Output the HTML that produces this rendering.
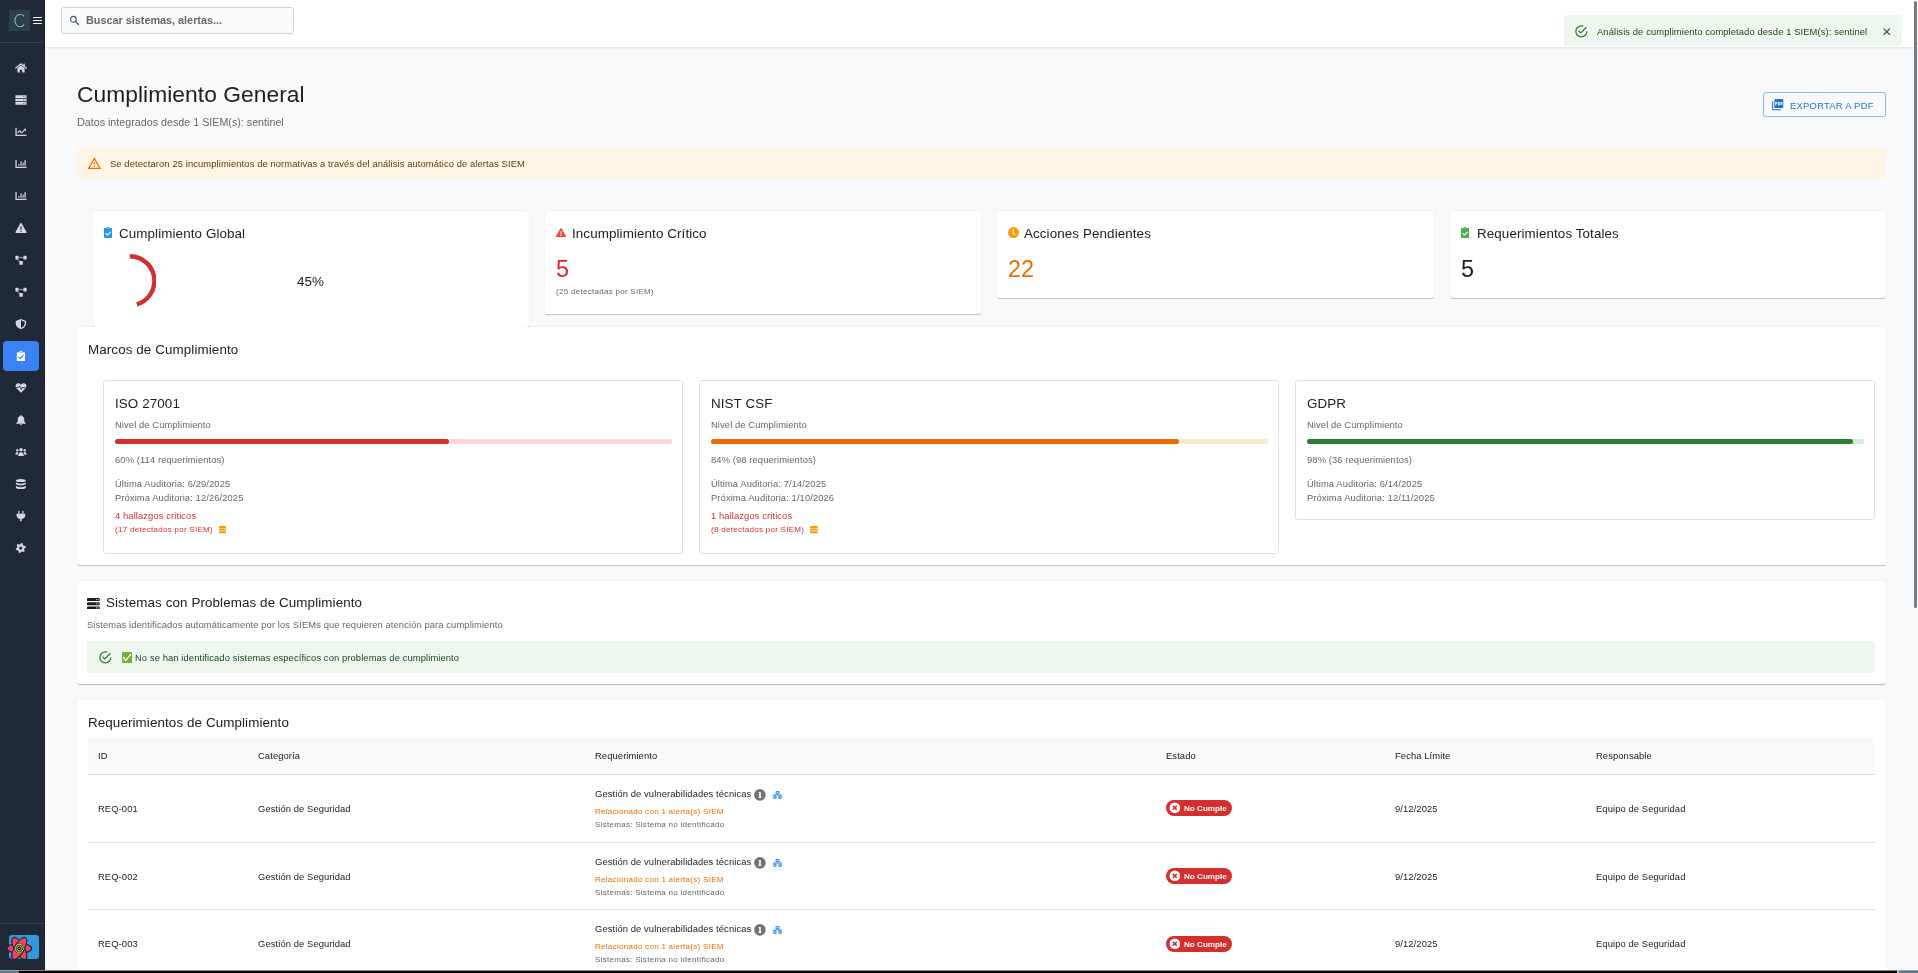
<!DOCTYPE html>
<html><head><meta charset="utf-8"><title>Cumplimiento</title>
<style>
html,body{margin:0;padding:0;}
body{width:1918px;height:973px;overflow:hidden;position:relative;background:#f8f9fb;font-family:"Liberation Sans",sans-serif;}
.t{position:absolute;white-space:nowrap;will-change:transform;}
.b{position:absolute;display:block;}
</style></head><body>
<div class="b" style="left:0.00px;top:0.00px;width:45.00px;height:973.00px;background:#1f2937;"></div>
<div class="b" style="left:44.00px;top:0.00px;width:1.00px;height:973.00px;background:#161e2b;"></div>
<div class="b" style="left:0.00px;top:42.00px;width:44.00px;height:1.00px;background:#374151;"></div>
<div class="b" style="left:9.00px;top:10.00px;width:21.00px;height:21.00px;background:#2e3e4c;"></div>
<svg class="b" style="left:12.00px;top:12.00px;" width="15.00" height="17.00" viewBox="0 0 15 17"><path d="M12.2 4.4 A5.3 6.2 0 1 0 12.2 12.6" fill="none" stroke="#80c2c2" stroke-width="1.05"/></svg>
<div class="b" style="left:33.20px;top:17.00px;width:8.80px;height:1.35px;background:#f3f4f6;border-radius:0.7px;"></div>
<div class="b" style="left:33.20px;top:19.90px;width:8.80px;height:1.35px;background:#f3f4f6;border-radius:0.7px;"></div>
<div class="b" style="left:33.20px;top:22.90px;width:8.80px;height:1.35px;background:#f3f4f6;border-radius:0.7px;"></div>
<div class="b" style="left:3.00px;top:341.00px;width:36.00px;height:30.00px;background:#3b82f6;border-radius:4px;"></div>
<svg class="b" style="left:14.60px;top:62.30px;" width="12.00" height="12.00" viewBox="0 0 24 24"><path d="M1.2 12.5 L12 3.6 L22.8 12.5" stroke="#d4d8de" stroke-width="2.3" fill="none" stroke-linecap="round" stroke-linejoin="round"/><rect x="16.8" y="3.2" width="2.8" height="5.5" fill="#d4d8de"/><path fill="#d4d8de" d="M4.8 12.4 L12 6.6 L19.2 12.4 V20.8 H14.3 V15.6 H9.7 V20.8 H4.8Z"/></svg>
<svg class="b" style="left:14.60px;top:94.40px;" width="12.00" height="12.00" viewBox="0 0 24 24"><rect x="0.8" y="2.6" width="22.4" height="5.4" rx="1" fill="#d4d8de"/><circle cx="17.3" cy="5.3" r="0.9" fill="#1f2937"/><circle cx="20.2" cy="5.3" r="0.9" fill="#1f2937"/><rect x="0.8" y="9.3" width="22.4" height="5.4" rx="1" fill="#d4d8de"/><circle cx="17.3" cy="12.0" r="0.9" fill="#1f2937"/><circle cx="20.2" cy="12.0" r="0.9" fill="#1f2937"/><rect x="0.8" y="16.0" width="22.4" height="5.4" rx="1" fill="#d4d8de"/><circle cx="17.3" cy="18.7" r="0.9" fill="#1f2937"/><circle cx="20.2" cy="18.7" r="0.9" fill="#1f2937"/></svg>
<svg class="b" style="left:14.60px;top:126.20px;" width="12.00" height="12.00" viewBox="0 0 24 24"><path d="M2.1 3.6 V18.7 H23.2" stroke="#d4d8de" stroke-width="2.6" fill="none"/><path d="M5.2 13.4 L9.8 9.6 L13.2 13.6 L18.8 8.2" stroke="#d4d8de" stroke-width="2.3" fill="none" stroke-linejoin="round"/><path fill="#d4d8de" d="M16.6 5.6 H22 V11Z"/></svg>
<svg class="b" style="left:14.60px;top:158.10px;" width="12.00" height="12.00" viewBox="0 0 24 24"><path d="M2.1 3.8 V18.7 H23.2" stroke="#d4d8de" stroke-width="2.6" fill="none"/><rect x="6.6" y="12.2" width="2.2" height="3.4" fill="#d4d8de"/><rect x="10.8" y="7" width="2.3" height="8.6" fill="#d4d8de"/><rect x="15" y="9" width="2.3" height="6.6" fill="#d4d8de"/><rect x="19" y="4.2" width="2.5" height="11.4" fill="#d4d8de"/></svg>
<svg class="b" style="left:14.60px;top:190.10px;" width="12.00" height="12.00" viewBox="0 0 24 24"><path d="M2.1 3.8 V18.7 H23.2" stroke="#d4d8de" stroke-width="2.6" fill="none"/><rect x="6.6" y="12.2" width="2.2" height="3.4" fill="#d4d8de"/><rect x="10.8" y="7" width="2.3" height="8.6" fill="#d4d8de"/><rect x="15" y="9" width="2.3" height="6.6" fill="#d4d8de"/><rect x="19" y="4.2" width="2.5" height="11.4" fill="#d4d8de"/></svg>
<svg class="b" style="left:14.60px;top:222.00px;" width="12.00" height="12.00" viewBox="0 0 24 24"><path fill="#d4d8de" d="M10.6 3 Q12 0.8 13.4 3 L23 20 Q23.6 22 21.6 22 H2.4 Q0.4 22 1 20Z"/><rect x="10.9" y="8.5" width="2.2" height="7.5" rx="1" fill="#1f2937"/><circle cx="12" cy="18.6" r="1.3" fill="#1f2937"/></svg>
<svg class="b" style="left:14.60px;top:254.30px;" width="12.00" height="12.00" viewBox="0 0 24 24"><path d="M5 7.2 H18 M4.2 9.5 L10.5 16.5" stroke="#d4d8de" stroke-width="1.3" fill="none"/><rect x="0.8" y="3.4" width="6" height="7.6" rx="0.8" fill="#d4d8de"/><rect x="16.8" y="3.4" width="6.4" height="7.6" rx="0.8" fill="#d4d8de"/><rect x="8.8" y="14" width="6.8" height="7.4" rx="0.8" fill="#d4d8de"/></svg>
<svg class="b" style="left:14.60px;top:286.30px;" width="12.00" height="12.00" viewBox="0 0 24 24"><path d="M5 7.2 H18 M4.2 9.5 L10.5 16.5" stroke="#d4d8de" stroke-width="1.3" fill="none"/><rect x="0.8" y="3.4" width="6" height="7.6" rx="0.8" fill="#d4d8de"/><rect x="16.8" y="3.4" width="6.4" height="7.6" rx="0.8" fill="#d4d8de"/><rect x="8.8" y="14" width="6.8" height="7.4" rx="0.8" fill="#d4d8de"/></svg>
<svg class="b" style="left:14.60px;top:318.00px;" width="12.00" height="12.00" viewBox="0 0 24 24"><path fill="#d4d8de" d="M12 1.8 L22.2 6 V10 C22.2 16.5 17.5 20.8 12 22.2 C6.5 20.8 1.4 16.5 1.4 10 V6Z"/><path fill="#1f2937" d="M12 4.6 L19.6 7.8 V10.2 C19.6 14.8 16.5 18.2 12 19.6Z"/></svg>
<svg class="b" style="left:14.60px;top:350.00px;" width="12.00" height="12.00" viewBox="0 0 24 24"><path fill="#ffffff" d="M3.6 5 H8.3 A3.7 3.7 0 0 1 15.7 5 H20 V22 H3.6Z"/><circle cx="12" cy="4.6" r="1.3" fill="#3b82f6"/><path fill="none" stroke="#3b82f6" stroke-width="2.4" d="M6.8 13.8 L10.4 17 L17.2 10.4"/></svg>
<svg class="b" style="left:14.60px;top:382.40px;" width="12.00" height="12.00" viewBox="0 0 24 24"><path fill="#d4d8de" d="M12 21.6 L3 12.5 C0 9.5 0.8 4.5 4.5 3 C7.5 1.8 10.3 3.2 12 5.5 C13.7 3.2 16.5 1.8 19.5 3 C23.2 4.5 24 9.5 21 12.5Z"/><path d="M0.5 11 H7.2 L9.2 7.8 L12.4 15 L14.5 10 L16 11.6 H23.5" stroke="#1f2937" stroke-width="1.6" fill="none" stroke-linejoin="round"/></svg>
<svg class="b" style="left:14.60px;top:414.00px;" width="12.00" height="12.00" viewBox="0 0 24 24"><path fill="#d4d8de" d="M12 1.8 C12.9 1.8 13.5 2.4 13.5 3.3 V4 C16.8 4.8 18.5 7.5 18.5 10.5 V15 L21.6 18.5 V19.6 H2.4 V18.5 L5.5 15 V10.5 C5.5 7.5 7.2 4.8 10.5 4 V3.3 C10.5 2.4 11.1 1.8 12 1.8Z"/><path fill="#d4d8de" d="M9.4 20.4 H14.6 A2.6 1.9 0 0 1 9.4 20.4Z"/></svg>
<svg class="b" style="left:14.60px;top:446.20px;" width="12.00" height="12.00" viewBox="0 0 24 24"><circle cx="12" cy="7.4" r="3.4" fill="#d4d8de"/><circle cx="4.6" cy="8.6" r="2.4" fill="#d4d8de"/><circle cx="19.4" cy="8.6" r="2.4" fill="#d4d8de"/><path fill="#d4d8de" d="M6.4 20 C6.4 15 8.5 12.4 12 12.4 C15.5 12.4 17.6 15 17.6 20Z"/><path fill="#d4d8de" d="M0.8 17.6 C0.8 14 2.2 12 4.6 12 C5.6 12 6.4 12.3 6.9 12.8 C5.8 14 5.2 15.8 5.2 17.6Z M23.2 17.6 C23.2 14 21.8 12 19.4 12 C18.4 12 17.6 12.3 17.1 12.8 C18.2 14 18.8 15.8 18.8 17.6Z"/></svg>
<svg class="b" style="left:14.60px;top:478.00px;" width="12.00" height="12.00" viewBox="0 0 24 24"><ellipse cx="11.7" cy="5" rx="9.9" ry="3.2" fill="#d4d8de"/><path fill="#d4d8de" d="M1.8 8.6 C3 10.4 7 11.4 11.7 11.4 S20.4 10.4 21.6 8.6 V12 C20.4 13.8 16.4 14.8 11.7 14.8 S3 13.8 1.8 12Z"/><path fill="#d4d8de" d="M1.8 15.6 C3 17.4 7 18.4 11.7 18.4 S20.4 17.4 21.6 15.6 V19 C21.6 20.8 17 22.2 11.7 22.2 S1.8 20.8 1.8 19Z"/></svg>
<svg class="b" style="left:14.60px;top:510.00px;" width="12.00" height="12.00" viewBox="0 0 24 24"><rect x="6.6" y="1.6" width="2.4" height="6.5" rx="1.2" fill="#d4d8de"/><rect x="14.6" y="1.6" width="2.4" height="6.5" rx="1.2" fill="#d4d8de"/><path fill="#d4d8de" d="M3 7.6 H20.6 V10.2 C20.6 14.4 17.6 17.4 13.4 18 V22.4 H10.2 V18 C6 17.4 3 14.4 3 10.2Z"/></svg>
<svg class="b" style="left:14.60px;top:542.00px;" width="12.00" height="12.00" viewBox="0 0 24 24"><path fill="#d4d8de" d="M12.83 1.89 L15.40 2.58 L16.00 6.13 L17.37 7.50 L20.92 8.10 L21.61 10.67 L18.84 12.97 L18.34 14.83 L19.59 18.21 L17.71 20.09 L14.33 18.84 L12.47 19.34 L10.17 22.11 L7.60 21.42 L7.00 17.87 L5.63 16.50 L2.08 15.90 L1.39 13.33 L4.16 11.03 L4.66 9.17 L3.41 5.79 L5.29 3.91 L8.67 5.16 L10.53 4.66Z"/><circle cx="11.50" cy="12.00" r="3.20" fill="#1f2937"/></svg>
<div class="b" style="left:0.00px;top:923.00px;width:44.00px;height:1.00px;background:#374151;"></div>
<div class="b" style="left:9.00px;top:935.00px;width:30.00px;height:24.00px;background:#3498db;border-radius:3px;"></div>
<svg class="b" style="left:4.00px;top:934.00px;" width="32.00" height="28.00" viewBox="0 0 32 28"><ellipse cx="0" cy="0" rx="12.4" ry="4.9" fill="#f7435a" stroke="#0f2a44" stroke-width="1.1" transform="translate(15.3 14.4) rotate(0)"/><ellipse cx="0" cy="0" rx="12.4" ry="4.9" fill="#f7435a" stroke="#0f2a44" stroke-width="1.1" transform="translate(15.3 14.4) rotate(60)"/><ellipse cx="0" cy="0" rx="12.4" ry="4.9" fill="#f7435a" stroke="#0f2a44" stroke-width="1.1" transform="translate(15.3 14.4) rotate(120)"/><polygon points="20.60,14.40 17.95,18.99 12.65,18.99 10.00,14.40 12.65,9.81 17.95,9.81" fill="#0f2a44"/><polygon points="19.70,14.40 17.50,18.21 13.10,18.21 10.90,14.40 13.10,10.59 17.50,10.59" fill="none" stroke="#e8cf45" stroke-width="1"/><circle cx="15.3" cy="14.4" r="2.4" fill="none" stroke="#e8cf45" stroke-width="0.85"/><circle cx="15.3" cy="14.4" r="0.6" fill="#e8cf45"/></svg>
<div class="b" style="left:45.00px;top:0.00px;width:1873.00px;height:47.00px;background:#fff;border-bottom:1px solid #e5e7eb;box-shadow:0 1px 2px rgba(0,0,0,0.05);"></div>
<div class="b" style="left:61.00px;top:7.00px;width:233.00px;height:27.00px;background:#f8fafc;border:1px solid #cbd5e1;border-radius:3px;box-sizing:border-box;"></div>
<svg class="b" style="left:68.50px;top:14.50px;" width="11.00" height="11.00" viewBox="0 0 24 24"><circle cx="9.6" cy="9.4" r="6.4" fill="none" stroke="#4a5a70" stroke-width="2.6"/><path d="M14.4 14.4 L20.8 20.8" stroke="#4a5a70" stroke-width="3" stroke-linecap="round"/></svg>
<div class="t" style="left:86.00px;top:14px;font-size:10.83px;line-height:12.45px;color:#676767;font-weight:700;">Buscar sistemas, alertas...</div>
<div class="b" style="left:1564.00px;top:15.00px;width:338.00px;height:31.00px;background:#edf7ed;border-radius:2.7px;"></div>
<svg class="b" style="left:1573.80px;top:23.80px;" width="14.74" height="14.74" viewBox="0 0 24 24"><path fill="#2e7d32" d="M20,12A8,8 0 0,1 12,20A8,8 0 0,1 4,12A8,8 0 0,1 12,4C12.76,4 13.5,4.11 14.2,4.31L15.77,2.74C14.61,2.26 13.34,2 12,2A10,10 0 0,0 2,12A10,10 0 0,0 12,22A10,10 0 0,0 22,12M7.91,10.08L6.5,11.5L11,16L21,6L19.59,4.58L11,13.17L7.91,10.08Z"/></svg>
<div class="t" style="left:1597.00px;top:27px;font-size:9.38px;line-height:10.79px;color:#1e4620;letter-spacing:0.100px;">Análisis de cumplimiento completado desde 1 SIEM(s): sentinel</div>
<svg class="b" style="left:1882.00px;top:27.00px;" width="9.50" height="9.50" viewBox="0 0 24 24"><path fill="none" stroke="#1e4620" stroke-width="2.6" d="M4 4l16 16M20 4 4 20"/></svg>
<div class="t" style="left:77.00px;top:81px;font-size:22.78px;line-height:26.20px;color:#212121;letter-spacing:0.060px;">Cumplimiento General</div>
<div class="t" style="left:77.00px;top:116px;font-size:10.72px;line-height:12.33px;color:#666666;letter-spacing:0.000px;">Datos integrados desde 1 SIEM(s): sentinel</div>
<div class="b" style="left:1763.00px;top:92.00px;width:123.00px;height:25.00px;border:1px solid rgba(25,118,210,0.5);border-radius:2.7px;box-sizing:border-box;"></div>
<svg class="b" style="left:1770.50px;top:97.50px;" width="13.40" height="13.40" viewBox="0 0 24 24"><path fill="#1976d2" d="M20 2H8c-1.1 0-2 .9-2 2v12c0 1.1.9 2 2 2h12c1.1 0 2-.9 2-2V4c0-1.1-.9-2-2-2zm-8.5 7.5c0 .83-.67 1.5-1.5 1.5H9v2H7.5V7H10c.83 0 1.5.67 1.5 1.5v1zm5 2c0 .83-.67 1.5-1.5 1.5h-2.5V7H15c.83 0 1.5.67 1.5 1.5v3zm4-3H19v1h1.5V11H19v2h-1.5V7h3v1.5zM9 9.5h1v-1H9v1zM4 6H2v14c0 1.1.9 2 2 2h14v-2H4V6zm10 5.5h1v-3h-1v3z"/></svg>
<div class="t" style="left:1790.00px;top:101px;font-size:9.38px;line-height:10.79px;color:#1976d2;letter-spacing:0.270px;">EXPORTAR A PDF</div>
<div class="b" style="left:77.00px;top:147.00px;width:1809.00px;height:32.00px;background:#fff4e5;border-radius:2.7px;"></div>
<svg class="b" style="left:87.30px;top:156.10px;" width="14.74" height="14.74" viewBox="0 0 24 24"><path fill="#ed6c02" d="M12 5.99L19.53 19H4.47L12 5.99M12 2L1 21h22L12 2zm1 14h-2v2h2v-2zm0-6h-2v4h2v-4z"/></svg>
<div class="t" style="left:110.20px;top:159px;font-size:9.38px;line-height:10.79px;color:#663c00;letter-spacing:0.100px;">Se detectaron 25 incumplimientos de normativas a través del análisis automático de alertas SIEM</div>
<div class="b" style="left:93.00px;top:211.00px;width:436.00px;height:115.70px;background:#fff;border-radius:2.68px;box-shadow:0px 1px 0.6px rgba(0,0,0,0.17),0px 0.5px 2px rgba(0,0,0,0.07);"></div>
<div class="b" style="left:545.00px;top:211.00px;width:436.00px;height:103.30px;background:#fff;border-radius:2.68px;box-shadow:0px 1px 0.6px rgba(0,0,0,0.17),0px 0.5px 2px rgba(0,0,0,0.07);"></div>
<div class="b" style="left:997.00px;top:211.00px;width:437.00px;height:87.00px;background:#fff;border-radius:2.68px;box-shadow:0px 1px 0.6px rgba(0,0,0,0.17),0px 0.5px 2px rgba(0,0,0,0.07);"></div>
<div class="b" style="left:1450.00px;top:211.00px;width:436.00px;height:87.00px;background:#fff;border-radius:2.68px;box-shadow:0px 1px 0.6px rgba(0,0,0,0.17),0px 0.5px 2px rgba(0,0,0,0.07);"></div>
<svg class="b" style="left:104.20px;top:226.90px;" width="8.20" height="10.90" viewBox="0 0 8.2 10.9"><rect x="0" y="1.1" width="8.2" height="9.8" rx="0.9" fill="#2196f3"/><circle cx="4.1" cy="1.35" r="1.35" fill="#2196f3"/><circle cx="4.1" cy="1.7" r="0.45" fill="#fff"/><path fill="none" stroke="#fff" stroke-width="1.15" stroke-linecap="round" stroke-linejoin="round" d="M2 6.5 L3.5 8 L6.4 5.2"/></svg>
<div class="t" style="left:119.40px;top:226px;font-size:13.40px;line-height:15.41px;color:#212121;letter-spacing:0.100px;">Cumplimiento Global</div>
<svg class="b" style="left:102.80px;top:253.90px;" width="53.60" height="53.60" viewBox="0 0 44 44"><circle cx="22" cy="22" r="20.2" fill="none" stroke="#d32f2f" stroke-width="3.6" stroke-dasharray="57.114 200" transform="rotate(-90 22 22)"/></svg>
<div class="t" style="left:297.00px;top:274px;font-size:13.40px;line-height:15.41px;color:#212121;letter-spacing:0.100px;">45%</div>
<svg class="b" style="left:556.10px;top:227.50px;" width="10.00" height="9.60" viewBox="0 0 10 9.6"><path fill="#f44336" d="M4.2 0.7 Q5 -0.3 5.8 0.7 L9.8 8.1 Q10.3 9.5 8.9 9.5 H1.1 Q-0.3 9.5 0.2 8.1Z"/><rect x="4.45" y="3" width="1.1" height="3.4" rx="0.5" fill="#fff"/><circle cx="5" cy="7.7" r="0.65" fill="#fff"/></svg>
<div class="t" style="left:572.00px;top:226px;font-size:13.40px;line-height:15.41px;color:#212121;letter-spacing:0.100px;">Incumplimiento Crítico</div>
<div class="t" style="left:556.00px;top:256px;font-size:23.40px;line-height:26.91px;color:#d32f2f;">5</div>
<div class="t" style="left:556.00px;top:287px;font-size:8.04px;line-height:9.25px;color:#666666;letter-spacing:0.270px;">(25 detectadas por SIEM)</div>
<svg class="b" style="left:1006.80px;top:225.70px;" width="13.10" height="13.10" viewBox="0 0 24 24"><circle cx="12" cy="12" r="10" fill="#ff9800"/><path fill="none" stroke="#fff" stroke-width="2.4" stroke-linecap="round" d="M11.3 6.3v6.3l2.6 2.4"/></svg>
<div class="t" style="left:1024.30px;top:226px;font-size:13.40px;line-height:15.41px;color:#212121;letter-spacing:0.100px;">Acciones Pendientes</div>
<div class="t" style="left:1008.40px;top:256px;font-size:23.40px;line-height:26.91px;color:#ed6c02;">22</div>
<svg class="b" style="left:1461.20px;top:226.90px;" width="8.20" height="10.90" viewBox="0 0 8.2 10.9"><rect x="0" y="1.1" width="8.2" height="9.8" rx="0.9" fill="#4caf50"/><circle cx="4.1" cy="1.35" r="1.35" fill="#4caf50"/><circle cx="4.1" cy="1.7" r="0.45" fill="#fff"/><path fill="none" stroke="#fff" stroke-width="1.15" stroke-linecap="round" stroke-linejoin="round" d="M2 6.5 L3.5 8 L6.4 5.2"/></svg>
<div class="t" style="left:1476.60px;top:226px;font-size:13.40px;line-height:15.41px;color:#212121;letter-spacing:0.100px;">Requerimientos Totales</div>
<div class="t" style="left:1460.70px;top:256px;font-size:23.40px;line-height:26.91px;color:#212121;">5</div>
<div class="b" style="left:77.00px;top:327.00px;width:1809.00px;height:238.00px;background:#fff;border-radius:2.68px;box-shadow:0px 1px 0.6px rgba(0,0,0,0.17),0px 0.5px 2px rgba(0,0,0,0.07);"></div>
<div class="t" style="left:87.60px;top:342px;font-size:13.40px;line-height:15.41px;color:#212121;letter-spacing:0.100px;">Marcos de Cumplimiento</div>
<div class="b" style="left:103.00px;top:380.00px;width:580.00px;height:174.00px;background:#fff;border:1px solid #e0e0e0;border-radius:2.7px;box-sizing:border-box;"></div>
<div class="t" style="left:115.20px;top:396px;font-size:13.40px;line-height:15.41px;color:#212121;letter-spacing:0.100px;">ISO 27001</div>
<div class="t" style="left:115.20px;top:420px;font-size:9.38px;line-height:10.79px;color:#666666;letter-spacing:0.100px;">Nivel de Cumplimiento</div>
<div class="b" style="left:115.20px;top:439.00px;width:557.00px;height:5.00px;background:#fad9d9;border-radius:3px;"></div>
<div class="b" style="left:115.20px;top:439.00px;width:334.20px;height:5.00px;background:#d32f2f;border-radius:3px;"></div>
<div class="t" style="left:115.20px;top:455px;font-size:9.38px;line-height:10.79px;color:#666666;letter-spacing:0.100px;">60% (114 requerimientos)</div>
<div class="t" style="left:115.20px;top:479px;font-size:9.38px;line-height:10.79px;color:#666666;letter-spacing:0.100px;">Última Auditoria: 6/29/2025</div>
<div class="t" style="left:115.20px;top:493px;font-size:9.38px;line-height:10.79px;color:#666666;letter-spacing:0.100px;">Próxima Auditoria: 12/26/2025</div>
<div class="t" style="left:115.20px;top:511px;font-size:9.38px;line-height:10.79px;color:#d32f2f;letter-spacing:0.100px;">4 hallazgos criticos</div>
<div class="t" style="left:115.20px;top:525px;font-size:8.04px;line-height:9.25px;color:#d32f2f;letter-spacing:0.270px;">(17 detectados por SIEM)</div>
<div class="b" style="left:699.00px;top:380.00px;width:580.00px;height:174.00px;background:#fff;border:1px solid #e0e0e0;border-radius:2.7px;box-sizing:border-box;"></div>
<div class="t" style="left:711.20px;top:396px;font-size:13.40px;line-height:15.41px;color:#212121;letter-spacing:0.100px;">NIST CSF</div>
<div class="t" style="left:711.20px;top:420px;font-size:9.38px;line-height:10.79px;color:#666666;letter-spacing:0.100px;">Nivel de Cumplimiento</div>
<div class="b" style="left:711.20px;top:439.00px;width:557.00px;height:5.00px;background:#fde8cf;border-radius:3px;"></div>
<div class="b" style="left:711.20px;top:439.00px;width:467.88px;height:5.00px;background:#ed6c02;border-radius:3px;"></div>
<div class="t" style="left:711.20px;top:455px;font-size:9.38px;line-height:10.79px;color:#666666;letter-spacing:0.100px;">84% (98 requerimientos)</div>
<div class="t" style="left:711.20px;top:479px;font-size:9.38px;line-height:10.79px;color:#666666;letter-spacing:0.100px;">Última Auditoria: 7/14/2025</div>
<div class="t" style="left:711.20px;top:493px;font-size:9.38px;line-height:10.79px;color:#666666;letter-spacing:0.100px;">Próxima Auditoria: 1/10/2026</div>
<div class="t" style="left:711.20px;top:511px;font-size:9.38px;line-height:10.79px;color:#d32f2f;letter-spacing:0.100px;">1 hallazgos criticos</div>
<div class="t" style="left:711.20px;top:525px;font-size:8.04px;line-height:9.25px;color:#d32f2f;letter-spacing:0.270px;">(8 detectados por SIEM)</div>
<div class="b" style="left:1295.00px;top:380.00px;width:580.00px;height:140.00px;background:#fff;border:1px solid #e0e0e0;border-radius:2.7px;box-sizing:border-box;"></div>
<div class="t" style="left:1307.20px;top:396px;font-size:13.40px;line-height:15.41px;color:#212121;letter-spacing:0.100px;">GDPR</div>
<div class="t" style="left:1307.20px;top:420px;font-size:9.38px;line-height:10.79px;color:#666666;letter-spacing:0.100px;">Nivel de Cumplimiento</div>
<div class="b" style="left:1307.20px;top:439.00px;width:557.00px;height:5.00px;background:#d5ecd6;border-radius:3px;"></div>
<div class="b" style="left:1307.20px;top:439.00px;width:545.86px;height:5.00px;background:#2e7d32;border-radius:3px;"></div>
<div class="t" style="left:1307.20px;top:455px;font-size:9.38px;line-height:10.79px;color:#666666;letter-spacing:0.100px;">98% (36 requerimientos)</div>
<div class="t" style="left:1307.20px;top:479px;font-size:9.38px;line-height:10.79px;color:#666666;letter-spacing:0.100px;">Última Auditoria: 6/14/2025</div>
<div class="t" style="left:1307.20px;top:493px;font-size:9.38px;line-height:10.79px;color:#666666;letter-spacing:0.100px;">Próxima Auditoria: 12/11/2025</div>
<svg class="b" style="left:218.70px;top:526.40px;" width="7.80" height="7.15" viewBox="0 0 7.8 7.15"><rect x="0" y="0.00" width="7.8" height="1.95" rx="0.4" fill="#ff9800"/><circle cx="6.1" cy="0.97" r="0.3" fill="#ffd9a0"/><circle cx="7" cy="0.97" r="0.3" fill="#ffd9a0"/><rect x="0" y="2.60" width="7.8" height="1.95" rx="0.4" fill="#ff9800"/><circle cx="6.1" cy="3.57" r="0.3" fill="#ffd9a0"/><circle cx="7" cy="3.57" r="0.3" fill="#ffd9a0"/><rect x="0" y="5.20" width="7.8" height="1.95" rx="0.4" fill="#ff9800"/><circle cx="6.1" cy="6.17" r="0.3" fill="#ffd9a0"/><circle cx="7" cy="6.17" r="0.3" fill="#ffd9a0"/></svg>
<svg class="b" style="left:810.20px;top:526.40px;" width="7.80" height="7.15" viewBox="0 0 7.8 7.15"><rect x="0" y="0.00" width="7.8" height="1.95" rx="0.4" fill="#ff9800"/><circle cx="6.1" cy="0.97" r="0.3" fill="#ffd9a0"/><circle cx="7" cy="0.97" r="0.3" fill="#ffd9a0"/><rect x="0" y="2.60" width="7.8" height="1.95" rx="0.4" fill="#ff9800"/><circle cx="6.1" cy="3.57" r="0.3" fill="#ffd9a0"/><circle cx="7" cy="3.57" r="0.3" fill="#ffd9a0"/><rect x="0" y="5.20" width="7.8" height="1.95" rx="0.4" fill="#ff9800"/><circle cx="6.1" cy="6.17" r="0.3" fill="#ffd9a0"/><circle cx="7" cy="6.17" r="0.3" fill="#ffd9a0"/></svg>
<div class="b" style="left:77.00px;top:581.00px;width:1809.00px;height:103.00px;background:#fff;border-radius:2.68px;box-shadow:0px 1px 0.6px rgba(0,0,0,0.17),0px 0.5px 2px rgba(0,0,0,0.07);"></div>
<svg class="b" style="left:87.20px;top:597.80px;" width="12.80" height="11.50" viewBox="0 0 12.8 11.5"><rect x="0" y="0.00" width="12.8" height="3.1" rx="0.9" fill="#1c1c1c"/><circle cx="9.4" cy="1.55" r="0.6" fill="#e0e0e0"/><circle cx="11.2" cy="1.55" r="0.6" fill="#e0e0e0"/><rect x="0" y="4.20" width="12.8" height="3.1" rx="0.9" fill="#1c1c1c"/><circle cx="9.4" cy="5.75" r="0.6" fill="#e0e0e0"/><circle cx="11.2" cy="5.75" r="0.6" fill="#e0e0e0"/><rect x="0" y="8.40" width="12.8" height="3.1" rx="0.9" fill="#1c1c1c"/><circle cx="9.4" cy="9.95" r="0.6" fill="#e0e0e0"/><circle cx="11.2" cy="9.95" r="0.6" fill="#e0e0e0"/></svg>
<div class="t" style="left:106.10px;top:595px;font-size:13.40px;line-height:15.41px;color:#212121;letter-spacing:0.100px;">Sistemas con Problemas de Cumplimiento</div>
<div class="t" style="left:87.40px;top:620px;font-size:9.38px;line-height:10.79px;color:#666666;letter-spacing:0.100px;">Sistemas identificados automáticamente por los SIEMs que requieren atención para cumplimiento</div>
<div class="b" style="left:87.00px;top:641.00px;width:1788.00px;height:32.00px;background:#edf7ed;border-radius:2.7px;"></div>
<svg class="b" style="left:97.50px;top:649.50px;" width="14.74" height="14.74" viewBox="0 0 24 24"><path fill="#2e7d32" d="M20,12A8,8 0 0,1 12,20A8,8 0 0,1 4,12A8,8 0 0,1 12,4C12.76,4 13.5,4.11 14.2,4.31L15.77,2.74C14.61,2.26 13.34,2 12,2A10,10 0 0,0 2,12A10,10 0 0,0 12,22A10,10 0 0,0 22,12M7.91,10.08L6.5,11.5L11,16L21,6L19.59,4.58L11,13.17L7.91,10.08Z"/></svg>
<div class="b" style="left:121.80px;top:652.30px;width:10.10px;height:10.50px;background:#74b13c;border-radius:0.6px;"></div>
<svg class="b" style="left:121.80px;top:652.30px;" width="10.10" height="10.50" viewBox="0 0 10.1 10.5"><path fill="none" stroke="#fff" stroke-width="1.25" stroke-linejoin="round" d="M1.5 5.1 L3.5 8.8 L8.8 2.2"/></svg>
<div class="t" style="left:135.40px;top:653px;font-size:9.38px;line-height:10.79px;color:#1e4620;letter-spacing:0.100px;">No se han identificado sistemas específicos con problemas de cumplimiento</div>
<div class="b" style="left:77.00px;top:700.00px;width:1809.00px;height:400.00px;background:#fff;border-radius:2.68px;box-shadow:0px 1px 0.6px rgba(0,0,0,0.17),0px 0.5px 2px rgba(0,0,0,0.07);"></div>
<div class="t" style="left:87.70px;top:715px;font-size:13.40px;line-height:15.41px;color:#212121;letter-spacing:0.100px;">Requerimientos de Cumplimiento</div>
<div class="b" style="left:87.70px;top:737.00px;width:1787.30px;height:38.00px;background:#f8f9fa;border-bottom:1px solid #e0e0e0;box-sizing:border-box;"></div>
<div class="t" style="left:98.20px;top:751px;font-size:9.38px;line-height:10.79px;color:#212121;letter-spacing:0.100px;">ID</div>
<div class="t" style="left:257.60px;top:751px;font-size:9.38px;line-height:10.79px;color:#212121;letter-spacing:0.100px;">Categoría</div>
<div class="t" style="left:595.20px;top:751px;font-size:9.38px;line-height:10.79px;color:#212121;letter-spacing:0.100px;">Requerimiento</div>
<div class="t" style="left:1166.00px;top:751px;font-size:9.38px;line-height:10.79px;color:#212121;letter-spacing:0.100px;">Estado</div>
<div class="t" style="left:1395.00px;top:751px;font-size:9.38px;line-height:10.79px;color:#212121;letter-spacing:0.100px;">Fecha Límite</div>
<div class="t" style="left:1596.00px;top:751px;font-size:9.38px;line-height:10.79px;color:#212121;letter-spacing:0.100px;">Responsable</div>
<div class="t" style="left:98.20px;top:804px;font-size:9.38px;line-height:10.79px;color:#212121;letter-spacing:0.100px;">REQ-001</div>
<div class="t" style="left:257.60px;top:804px;font-size:9.38px;line-height:10.79px;color:#212121;letter-spacing:0.100px;">Gestión de Seguridad</div>
<div class="t" style="left:595.20px;top:789px;font-size:9.38px;line-height:10.79px;color:#212121;letter-spacing:0.100px;">Gestión de vulnerabilidades técnicas</div>
<svg class="b" style="left:754.00px;top:789.00px;" width="11.80" height="11.80" viewBox="0 0 12 12"><circle cx="6" cy="6" r="5.9" fill="#737373"/><path fill="#fff" d="M4.6 3.1 H6.9 V8.4 H7.6 V9.2 H4.4 V8.4 H5.3 V3.9 H4.6Z"/></svg>
<svg class="b" style="left:773.00px;top:791.00px;" width="9.00" height="8.00" viewBox="0 0 9 8"><g fill="none" stroke="#2f95f0" stroke-width="1.15"><rect x="3.1" y="0.6" width="2.9" height="2.2" rx="0.5"/><circle cx="1.9" cy="6.3" r="1.25"/><circle cx="7.1" cy="6.3" r="1.25"/></g><path fill="#2f95f0" d="M4.1 2.8 H5 V3.5 H9 V4.5 H7.6 V5 H6.6 V4.5 H2.4 V5 H1.4 V4.5 H0 V3.5 H4.1Z"/></svg>
<div class="t" style="left:595.20px;top:807px;font-size:8.04px;line-height:9.25px;color:#ed6c02;letter-spacing:0.270px;">Relacionado con 1 alerta(s) SIEM</div>
<div class="t" style="left:595.20px;top:820px;font-size:8.04px;line-height:9.25px;color:#666666;letter-spacing:0.270px;">Sistemas: Sistema no identificado</div>
<div class="b" style="left:1166.00px;top:800.00px;width:66.00px;height:16.00px;background:#d32f2f;border-radius:8px;"></div>
<svg class="b" style="left:1168.90px;top:802.00px;" width="11.60" height="11.60" viewBox="0 0 24 24"><circle cx="12" cy="12" r="11" fill="#fff"/><path fill="none" stroke="#d32f2f" stroke-width="3.4" d="M8 8l8 8M16 8l-8 8"/></svg>
<div class="t" style="left:1183.60px;top:804px;font-size:8.10px;line-height:9.31px;color:#fff;font-weight:700;">No Cumple</div>
<div class="t" style="left:1395.00px;top:804px;font-size:9.38px;line-height:10.79px;color:#212121;letter-spacing:0.100px;">9/12/2025</div>
<div class="t" style="left:1596.00px;top:804px;font-size:9.38px;line-height:10.79px;color:#212121;letter-spacing:0.100px;">Equipo de Seguridad</div>
<div class="b" style="left:87.70px;top:842.00px;width:1787.30px;height:1.00px;background:#e0e0e0;"></div>
<div class="t" style="left:98.20px;top:872px;font-size:9.38px;line-height:10.79px;color:#212121;letter-spacing:0.100px;">REQ-002</div>
<div class="t" style="left:257.60px;top:872px;font-size:9.38px;line-height:10.79px;color:#212121;letter-spacing:0.100px;">Gestión de Seguridad</div>
<div class="t" style="left:595.20px;top:857px;font-size:9.38px;line-height:10.79px;color:#212121;letter-spacing:0.100px;">Gestión de vulnerabilidades técnicas</div>
<svg class="b" style="left:754.00px;top:857.00px;" width="11.80" height="11.80" viewBox="0 0 12 12"><circle cx="6" cy="6" r="5.9" fill="#737373"/><path fill="#fff" d="M4.6 3.1 H6.9 V8.4 H7.6 V9.2 H4.4 V8.4 H5.3 V3.9 H4.6Z"/></svg>
<svg class="b" style="left:773.00px;top:859.00px;" width="9.00" height="8.00" viewBox="0 0 9 8"><g fill="none" stroke="#2f95f0" stroke-width="1.15"><rect x="3.1" y="0.6" width="2.9" height="2.2" rx="0.5"/><circle cx="1.9" cy="6.3" r="1.25"/><circle cx="7.1" cy="6.3" r="1.25"/></g><path fill="#2f95f0" d="M4.1 2.8 H5 V3.5 H9 V4.5 H7.6 V5 H6.6 V4.5 H2.4 V5 H1.4 V4.5 H0 V3.5 H4.1Z"/></svg>
<div class="t" style="left:595.20px;top:875px;font-size:8.04px;line-height:9.25px;color:#ed6c02;letter-spacing:0.270px;">Relacionado con 1 alerta(s) SIEM</div>
<div class="t" style="left:595.20px;top:888px;font-size:8.04px;line-height:9.25px;color:#666666;letter-spacing:0.270px;">Sistemas: Sistema no identificado</div>
<div class="b" style="left:1166.00px;top:868.00px;width:66.00px;height:16.00px;background:#d32f2f;border-radius:8px;"></div>
<svg class="b" style="left:1168.90px;top:870.00px;" width="11.60" height="11.60" viewBox="0 0 24 24"><circle cx="12" cy="12" r="11" fill="#fff"/><path fill="none" stroke="#d32f2f" stroke-width="3.4" d="M8 8l8 8M16 8l-8 8"/></svg>
<div class="t" style="left:1183.60px;top:872px;font-size:8.10px;line-height:9.31px;color:#fff;font-weight:700;">No Cumple</div>
<div class="t" style="left:1395.00px;top:872px;font-size:9.38px;line-height:10.79px;color:#212121;letter-spacing:0.100px;">9/12/2025</div>
<div class="t" style="left:1596.00px;top:872px;font-size:9.38px;line-height:10.79px;color:#212121;letter-spacing:0.100px;">Equipo de Seguridad</div>
<div class="b" style="left:87.70px;top:909.00px;width:1787.30px;height:1.00px;background:#e0e0e0;"></div>
<div class="t" style="left:98.20px;top:939px;font-size:9.38px;line-height:10.79px;color:#212121;letter-spacing:0.100px;">REQ-003</div>
<div class="t" style="left:257.60px;top:939px;font-size:9.38px;line-height:10.79px;color:#212121;letter-spacing:0.100px;">Gestión de Seguridad</div>
<div class="t" style="left:595.20px;top:924px;font-size:9.38px;line-height:10.79px;color:#212121;letter-spacing:0.100px;">Gestión de vulnerabilidades técnicas</div>
<svg class="b" style="left:754.00px;top:924.00px;" width="11.80" height="11.80" viewBox="0 0 12 12"><circle cx="6" cy="6" r="5.9" fill="#737373"/><path fill="#fff" d="M4.6 3.1 H6.9 V8.4 H7.6 V9.2 H4.4 V8.4 H5.3 V3.9 H4.6Z"/></svg>
<svg class="b" style="left:773.00px;top:926.00px;" width="9.00" height="8.00" viewBox="0 0 9 8"><g fill="none" stroke="#2f95f0" stroke-width="1.15"><rect x="3.1" y="0.6" width="2.9" height="2.2" rx="0.5"/><circle cx="1.9" cy="6.3" r="1.25"/><circle cx="7.1" cy="6.3" r="1.25"/></g><path fill="#2f95f0" d="M4.1 2.8 H5 V3.5 H9 V4.5 H7.6 V5 H6.6 V4.5 H2.4 V5 H1.4 V4.5 H0 V3.5 H4.1Z"/></svg>
<div class="t" style="left:595.20px;top:942px;font-size:8.04px;line-height:9.25px;color:#ed6c02;letter-spacing:0.270px;">Relacionado con 1 alerta(s) SIEM</div>
<div class="t" style="left:595.20px;top:955px;font-size:8.04px;line-height:9.25px;color:#666666;letter-spacing:0.270px;">Sistemas: Sistema no identificado</div>
<div class="b" style="left:1166.00px;top:936.00px;width:66.00px;height:16.00px;background:#d32f2f;border-radius:8px;"></div>
<svg class="b" style="left:1168.90px;top:938.00px;" width="11.60" height="11.60" viewBox="0 0 24 24"><circle cx="12" cy="12" r="11" fill="#fff"/><path fill="none" stroke="#d32f2f" stroke-width="3.4" d="M8 8l8 8M16 8l-8 8"/></svg>
<div class="t" style="left:1183.60px;top:940px;font-size:8.10px;line-height:9.31px;color:#fff;font-weight:700;">No Cumple</div>
<div class="t" style="left:1395.00px;top:939px;font-size:9.38px;line-height:10.79px;color:#212121;letter-spacing:0.100px;">9/12/2025</div>
<div class="t" style="left:1596.00px;top:939px;font-size:9.38px;line-height:10.79px;color:#212121;letter-spacing:0.100px;">Equipo de Seguridad</div>
<div class="b" style="left:1914.00px;top:1.00px;width:3.00px;height:607.00px;background:#777c7e;border-radius:1.5px;box-shadow:0 0 0 0.6px rgba(255,255,255,0.8);"></div>
<div class="b" style="left:0.00px;top:970.00px;width:1918.00px;height:1.00px;background:#9aa0a4;"></div>
<div class="b" style="left:0.00px;top:971.00px;width:1918.00px;height:2.00px;background:#5f7583;"></div>
<div class="b" style="left:19.00px;top:970.00px;width:1878.00px;height:1.00px;background:#8a8a8a;"></div>
<div class="b" style="left:19.00px;top:971.00px;width:1878.00px;height:2.00px;background:#000;"></div>
<div class="b" style="left:1897.00px;top:970.00px;width:1.50px;height:3.00px;background:#c4c8cb;"></div>
</body></html>
